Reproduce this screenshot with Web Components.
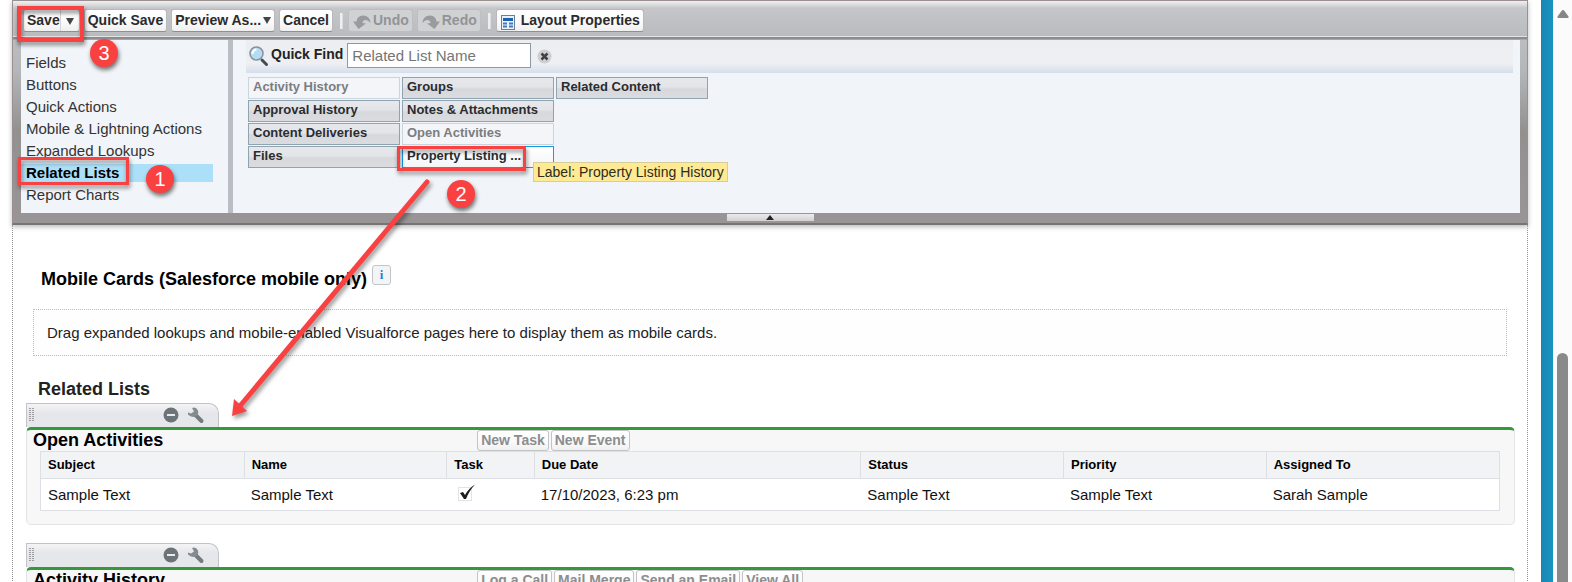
<!DOCTYPE html>
<html lang="en">
<head>
<meta charset="utf-8">
<title>Page Layout Editor</title>
<style>
html, body { height: 100%; }
body { margin: 0; background: #fff; color: #222; font: 15px/18px "Liberation Sans", Arial, sans-serif; overflow: hidden; }
</style>
</head>
<body>
<app-shell>
  <layout-palette slot="main">
    <tool-bar slot="toolbar">
      <split-button>Save</split-button>
      <tool-button>Quick Save</tool-button>
      <tool-button menu>Preview As...</tool-button>
      <tool-button>Cancel</tool-button>
      <tool-separator></tool-separator>
      <tool-button disabled icon="undo">Undo</tool-button>
      <tool-button disabled icon="redo">Redo</tool-button>
      <tool-separator></tool-separator>
      <tool-button icon="layout">Layout Properties</tool-button>
    </tool-bar>
    <palette-nav slot="nav"></palette-nav>
    <quick-find slot="search"></quick-find>
    <palette-item slot="items" disabled>Activity History</palette-item>
    <palette-item slot="items">Approval History</palette-item>
    <palette-item slot="items">Content Deliveries</palette-item>
    <palette-item slot="items">Files</palette-item>
    <palette-item slot="items">Groups</palette-item>
    <palette-item slot="items">Notes &amp; Attachments</palette-item>
    <palette-item slot="items" disabled>Open Activities</palette-item>
    <palette-item slot="items" active>Property Listing ...</palette-item>
    <palette-item slot="items">Related Content</palette-item>
  </layout-palette>
  <layout-canvas slot="main">
    <mobile-cards>Drag expanded lookups and mobile-enabled Visualforce pages here to display them as mobile cards.</mobile-cards>
    <section-title>Related Lists</section-title>
    <related-list heading="Open Activities" actions="New Task|New Event"><activity-table></activity-table></related-list>
    <related-list heading="Activity History" actions="Log a Call|Mail Merge|Send an Email|View All"></related-list>
  </layout-canvas>
</app-shell>
<hover-tip>Label: Property Listing History</hover-tip>
<callout-layer></callout-layer>

<script>
const reset = '*{box-sizing:border-box}button,input{font:inherit;color:inherit;margin:0}';
function define(name, render) {
  customElements.define(name, class extends HTMLElement {
    constructor() {
      super();
      this.attachShadow({ mode: 'open' });
    }
    connectedCallback() {
      const t = document.createElement('template');
      t.innerHTML = '<style>' + reset + '</style>' + render(this);
      this.shadowRoot.replaceChildren(t.content.cloneNode(true));
    }
  });
}

define('app-shell', () => `
<style>
:host{display:flex;height:100vh;overflow:hidden}
main{flex:1;min-width:0;padding:0 13px 0 12px;overflow:hidden}
.edge{width:12px;background:linear-gradient(90deg,#1b86b4,#1795c0)}
</style>
<main><slot name="main"></slot></main>
<div class="edge"></div>
<scroll-track></scroll-track>`);

define('scroll-track', () => `
<style>
:host{display:flex;flex-direction:column;align-items:center;width:19px;background:#fbfbfb;padding-top:10px}
svg{display:block;flex:none}
.gap{flex:0 0 60%;margin-top:-8px}
.thumb{flex:1;width:11px;background:#8a8a8a;border-radius:6px 6px 0 0}
</style>
<svg width="12" height="8" viewBox="0 0 12 8"><path d="M6 0 Q7 0 7.500 1 L11.500 6.500 Q12 8 10.500 8 H1.500 Q0 8 .5 6.500 L4.500 1 Q5 0 6 0Z" fill="#868686"/></svg>
<div class="gap"></div><div class="thumb"></div>`);

define('layout-palette', () => `
<style>
:host{display:block;position:relative;border:1px solid #9c8f91;border-bottom:2px solid #777476;background:linear-gradient(#c4c5c8,#b4b6ba 70px,#929190 130px,#999596);box-shadow:0 2px 5px #bbb}
.body{display:flex;margin:0 7px 0 8px;background:#f1f4f8;min-height:173px}
nav{width:207px}
.bar{width:5px;background:#bbbdc5}
.pane{flex:1;min-width:0;padding:0 7px 0 13px}
.items{display:grid;grid-auto-flow:column;grid-template-rows:repeat(4,22px);grid-auto-columns:152px;gap:1px 2px;padding:4px 2px}
.foot{height:10px;display:flex;justify-content:center}
.grip{width:87px;height:7px;margin-top:1px;border:0;padding:0;display:flex;justify-content:center;background:linear-gradient(#eceaea,#d3d1d1)}
</style>
<slot name="toolbar"></slot>
<div class="body">
  <nav><slot name="nav"></slot></nav>
  <div class="bar"></div>
  <div class="pane"><slot name="search"></slot><div class="items"><slot name="items"></slot></div></div>
</div>
<div class="foot"><button class="grip" aria-label="Collapse"><svg width="10" height="7" viewBox="0 0 10 7"><path d="M5 1 L9 6 H1Z" fill="#222"/></svg></button></div>`);

define('tool-bar', () => `
<style>
:host{display:flex;gap:4px;align-items:center;height:39px;padding:0 10px;background:linear-gradient(#efefef,#dfe1e2 3px,#c5c6c9 7px,#babbbe 35px,#e4e4e5 35px,#e4e4e5 36px,#88888c 36px,#929296 38px,#b9bac0)}
</style><slot></slot>`);

define('tool-separator', () => `
<style>:host{display:block;width:2px;height:16px;margin:0 1px 0 3px;background:#eee;border-right:1px solid #ddd}</style>`);

const icons = {
  undo: '<svg width="18" height="14" viewBox="0 0 18 14"><path d="M0 6.500 L3.500 6.500 Q4 1 10 .5 Q17 .5 17.500 8 Q15 4.500 12 5 Q9.500 5.500 9.500 8 L13 8.500 L5.500 14Z" fill="#9a9b9e"/></svg>',
  redo: '<svg width="18" height="14" viewBox="0 0 18 14"><path d="M18 6.500 L14.500 6.500 Q14 1 8 .5 Q1 .5 .5 8 Q3 4.500 6 5 Q8.500 5.500 8.500 8 L5 8.500 L12.500 14Z" fill="#9a9b9e"/></svg>',
  layout: '<svg width="14" height="15" viewBox="0 0 14 15"><rect x=".5" y=".5" width="13" height="14" fill="#e9f0f8" stroke="#6d7f92"/><rect x="2" y="3" width="10" height="3" fill="#1c62b4"/><path d="M2 8.500H6M8 8.500H12M2 11.500H6M8 11.500H12" stroke="#3f7cc0" stroke-width="2"/></svg>'
};
const arrow = '<svg class="arrow" width="8" height="7" viewBox="0 0 8 7"><path d="M0 0H8L4 7Z" fill="#444"/></svg>';
const buttonFace = 'border:1px solid #b9b9bb;border-bottom-color:#8f8f92;border-radius:3px;background:linear-gradient(#fff,#fafafa 60%,#efeff0);font-weight:bold;font-size:14px;line-height:18px;color:#2b2b2d;';

define('tool-button', el => `
<style>
:host{display:block}
button{${buttonFace}display:flex;align-items:center;height:23px;padding:0 3px 1px;white-space:nowrap}
button.layout{padding:0 3px 1px 4px;gap:6px}
button.undo,button.redo{padding:0 3px 1px 4px;gap:2px}
button:disabled{background:#d0d1d3;border-color:#bdbec0;color:#929497}
.arrow{margin-left:2px}
.layout svg,.undo svg,.redo svg{margin-top:4px}
</style>
<button class="${el.getAttribute('icon') || ''}" ${el.hasAttribute('disabled') ? 'disabled' : ''}>${icons[el.getAttribute('icon')] || ''}<slot></slot>${el.hasAttribute('menu') ? arrow : ''}</button>`);

define('split-button', () => `
<style>
:host{display:flex;${buttonFace}height:23px;box-sizing:border-box}
button{border:0;background:none;padding:0 0 1px 3px;height:21px}
button+button{border-left:1px solid #d5d5d6;padding:0 5px 1px}
</style>
<button><slot></slot></button><button aria-label="More save options">${arrow}</button>`);

define('palette-nav', () => `
<style>
ul{list-style:none;margin:0;padding:14px 15px 0 0;display:grid;gap:4px;font-size:15px}
li{line-height:18px;padding-left:5px;white-space:nowrap}
li.on{background:#ace0f8;font-weight:bold}
a{color:#333;text-decoration:none}.on a{color:#000}
</style>
<ul>${['Fields', 'Buttons', 'Quick Actions', 'Mobile &amp; Lightning Actions', 'Expanded Lookups', 'Related Lists', 'Report Charts']
  .map(t => `<li class="${t === 'Related Lists' ? 'on' : ''}"><a href="#">${t}</a></li>`).join('')}</ul>`);

define('quick-find', () => `
<style>
:host{display:flex;align-items:center;height:33px;padding:0 2px;background:linear-gradient(#eceef2,#edeff3 24px,#d5deea)}
label{font-weight:bold;font-size:14px;color:#222;margin:0 4px 6px 2px}
input{width:184px;height:25px;padding:0 4px;border:1px solid #8c9aa3;background:#fff;font-size:15px;margin-bottom:3px}
input::placeholder{color:#757575;opacity:1}
button{border:0;background:none;padding:0;margin-left:6px;height:15px}
svg{display:block}
</style>
<svg width="21" height="21" viewBox="0 0 21 21"><path d="M14 14 L18.500 18.500" stroke="#444b52" stroke-width="3" stroke-linecap="round"/><circle cx="8.500" cy="7.500" r="6.500" fill="#b5dcf2" stroke="#87929c" stroke-width="1.500"/><path d="M4.500 8 Q4.500 4 8.500 3.500" stroke="#fff" stroke-width="2" fill="none"/></svg>
<label for="q">Quick Find</label><input id="q" type="text" placeholder="Related List Name">
<button aria-label="Clear"><svg width="15" height="15" viewBox="0 0 15 15"><circle cx="7.500" cy="7.500" r="7" fill="#ccced0"/><path d="M4.500 4.500 L10.500 10.500 M10.500 4.500 L4.500 10.500" stroke="#3f4244" stroke-width="2.500"/></svg></button>`);

define('palette-item', el => `
<style>
:host{display:block}
button{display:block;width:100%;height:22px;padding:0 4px 3px;text-align:left;font-weight:bold;font-size:13px;line-height:18px;color:#2a2c2f;border:1px solid #8fa3b0;background:linear-gradient(#e6e8ec,#e2e4e8 45%,#d6d8dc 55%,#dadce0);white-space:nowrap}
button:disabled{background:#f3f5f9;border-color:#c9d6de;color:#7b7d80}
.active{background:linear-gradient(#fff,#f4f5f7);border-color:#1a9be6}
</style>
<button class="${el.hasAttribute('active') ? 'active' : ''}" ${el.hasAttribute('disabled') ? 'disabled' : ''}><slot></slot></button>`);

define('layout-canvas', () => `
<style>:host{display:block;border:1px dotted #909090;border-width:0 1px;padding:40px 12px 0 13px}</style><slot></slot>`);

define('mobile-cards', () => `
<style>
:host{display:block;padding:0 8px 0 7px}
header{display:flex;gap:5px;align-items:flex-start;padding-left:8px}
h2{margin:3px 0 0;font-size:18px;line-height:22px;color:#000}
button{width:19px;height:20px;padding:0;border:1px solid #c3c5c9;border-radius:3px;background:#f3f4f6;color:#2a7fd0;font:bold 13px/16px "Liberation Serif",serif}
p{margin:19px 0 0;padding:14px 13px 13px;border:1px dotted #bbb;color:#222;background:#fefefe}
</style>
<header><h2>Mobile Cards (Salesforce mobile only)</h2><button aria-label="Information">i</button></header>
<p><slot></slot></p>`);

define('section-title', () => `
<style>:host{display:block;padding:22px 0 3px 12px}h2{margin:0;font-size:18px;line-height:22px}</style><h2><slot></slot></h2>`);

define('related-list', el => `
<style>
:host{display:block;margin-bottom:18px}
.tab{display:flex;align-items:center;width:193px;height:24px;padding:0 13px 2px 2px;border:1px solid #c2c3c6;border-bottom:0;border-radius:0 10px 0 0;background:linear-gradient(#f4f4f6,#e6e7eb 40%)}
.tab button{border:0;padding:0;background:none;height:18px}
.tab svg{display:block}
.grip{margin-right:auto}
.tab button+button{margin-left:8px}
section{border:1px solid #e4e4e6;border-top:3px solid #36973b;border-radius:5px;background:#f7f7f8;padding:0 14px 13px 13px}
header{display:grid;grid-template-columns:30% 1fr;height:21px;margin:0 -7px}
h3{margin:0;font-size:18px;line-height:20px;color:#000}
.actions{display:flex;gap:2px;padding-left:2px}
.actions button{${buttonFace}border-color:#c4c4c6;color:#8c8d8f;height:21px;padding:0 3px 1px;white-space:nowrap}
</style>
<div class="tab">
  <svg class="grip" width="6" height="16" viewBox="0 0 6 16"><path d="M1 1V15M4 1V15" stroke="#555" stroke-dasharray="1 1"/></svg>
  <button aria-label="Remove"><svg width="16" height="18" viewBox="0 0 16 18"><circle cx="8" cy="9" r="7.500" fill="#6c747a"/><path d="M4 9H12" stroke="#e8eaec" stroke-width="2"/></svg></button>
  <button aria-label="Related list properties"><svg width="18" height="18" viewBox="0 0 18 18"><path d="M14.500 15 L8 8.500" stroke="#747b80" stroke-width="4" stroke-linecap="round"/><path d="M5 2 Q9 .5 11 4.500 Q12 8.500 9 10.500 Q4 12 1 8.500 L1 6.500 L4 7.500 L7 5.500Z" fill="#858c91"/></svg></button>
</div>
<section><header><h3>${el.getAttribute('heading')}</h3><div class="actions">${el.getAttribute('actions').split('|').map(t => `<button disabled>${t}</button>`).join('')}</div></header><slot></slot></section>`);

define('activity-table', () => `
<style>
:host{display:block}
table{width:100%;table-layout:fixed;border-collapse:separate;border-spacing:0;border:1px solid #dcdfe4;background:#fff;color:#111}
th{height:27px;padding:0 7px;text-align:left;font-size:13px;color:#000;background:#f1f3f5;border-bottom:1px solid #dcdfe4}
th+th{border-left:1px solid #dcdfe4}
td{height:31px;padding:0 7px}
svg{display:block;margin:-4px 0 0 5px}
</style>
<table>
<colgroup><col style="width:13.900%"><col style="width:13.900%"><col style="width:6%"><col style="width:22.400%"><col style="width:13.900%"><col style="width:13.900%"><col></colgroup>
<thead><tr><th>Subject</th><th>Name</th><th>Task</th><th>Due Date</th><th>Status</th><th>Priority</th><th>Assigned To</th></tr></thead>
<tbody><tr><td>Sample Text</td><td>Sample Text</td><td><svg width="18" height="17" viewBox="0 0 18 17" role="img" aria-label="Checked"><rect x=".5" y="3.500" width="13" height="13" fill="none" stroke="#e4e4e4"/><path d="M2 9 L5 8 L7 11 Q11 4 17 .5 Q11 7 8 15 L6 15Z" fill="#1c1c1c"/></svg></td><td>17/10/2023, 6:23 pm</td><td>Sample Text</td><td>Sample Text</td><td>Sarah Sample</td></tr></tbody>
</table>`);

define('hover-tip', () => `
<style>:host{position:absolute;left:533px;top:162px;height:20px;padding:0 3px;border:1px solid #d6cd98;background:#ffea94;color:#2e2b1c;font-size:14px;line-height:18px;white-space:nowrap;box-sizing:border-box}</style><slot></slot>`);

define('callout-layer', () => `
<style>
:host{position:absolute;left:0;top:0;pointer-events:none}
.box,.badge,svg{position:absolute}
.box{border:3px solid #fa4141;filter:drop-shadow(1px 3px 2px #0007)}
.save{left:17px;top:6px;width:67px;height:36px;border-width:4px}
.list{left:18px;top:157px;width:111px;height:28px}
.item{left:397px;top:146px;width:129px;height:25px}
.badge{width:28px;height:28px;border-radius:50%;background:#fa4141;color:#fff;font-size:20px;line-height:28px;text-align:center;box-shadow:1px 3px 4px #0008}
.one{left:146px;top:165px}.two{left:447px;top:180px}.three{left:90px;top:39px}
svg{left:0;top:0;filter:drop-shadow(2px 3px 2px #0006)}
</style>
<div class="box save"></div><div class="box list"></div><div class="box item"></div>
<svg width="440" height="430" viewBox="0 0 440 430"><path d="M427 182 L240 406" stroke="#fa4141" stroke-width="5" stroke-linecap="round"/><path d="M232 416 L234 399 L247 411Z" fill="#fa4141"/></svg>
<div class="badge one">1</div><div class="badge two">2</div><div class="badge three">3</div>`);
</script>
</body>
</html>
